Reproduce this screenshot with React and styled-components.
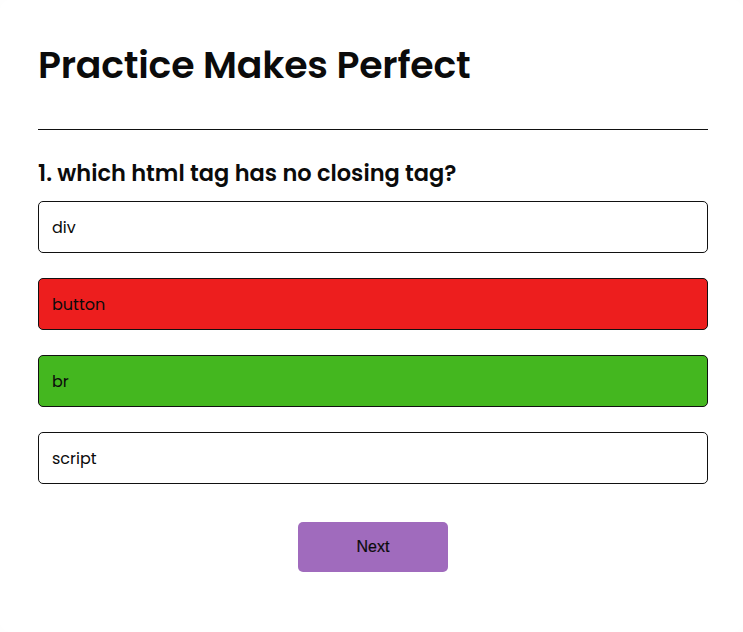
import React, { useState } from 'react';
import styled, { createGlobalStyle } from 'styled-components';

const GlobalStyle = createGlobalStyle`
  body {
    margin: 0;
    background: #fefefe;
    font-family: "Poppins", "Inter", "Noto Sans", sans-serif;
    color: #0b0b0b;
  }
`

const Card = styled.div`
  background: #fff;
  border-radius: 10px;
  padding: 40px 35px 60px 38px;
  min-height: 632px;
  box-sizing: border-box;
`

const Title = styled.h1`
  font-size: 37.8px;
  font-weight: 600;
  line-height: 50px;
  margin: 0 0 39px;
  letter-spacing: -0.2px;
`

const Rule = styled.hr`
  border: none;
  border-top: 1px solid #111;
  margin: 0 0 28px;
`

const Question = styled.h2`
  font-size: 22.5px;
  font-weight: 600;
  line-height: 30px;
  margin: 0 0 13px;
`

const OptionList = styled.ul`
  list-style: none;
  margin: 0;
  padding: 0;
  display: flex;
  flex-direction: column;
  gap: 25px;
`

const Option = styled.li`
  height: 52px;
  box-sizing: border-box;
  border: 1px solid #111;
  border-radius: 5px;
  padding: 0 13px;
  display: flex;
  align-items: center;
  font-size: 16px;
  background: ${({ $state }) =>
    $state === 'wrong' ? '#ed1e1e' : $state === 'right' ? '#44b71f' : '#fff'};
  cursor: pointer;
`

const Footer = styled.div`
  display: flex;
  justify-content: center;
  margin-top: 38px;
`

const NextButton = styled.button`
  width: 150px;
  height: 50px;
  border: none;
  border-radius: 5px;
  background: #a06bbd;
  font-family: "Liberation Sans", Arial, sans-serif;
  font-size: 16px;
  font-weight: 500;
  color: #0b0b0b;
  cursor: pointer;
  -webkit-text-stroke: 0.2px #0b0b0b;
`

const options = [
  { text: 'div', state: '' },
  { text: 'button', state: 'wrong' },
  { text: 'br', state: 'right' },
  { text: 'script', state: '' },
]

const App = () => {
  const [index] = useState(0)
  return (
    <>
      <GlobalStyle />
      <Card>
        <Title>Practice Makes Perfect</Title>
        <Rule />
        <Question>{index + 1}. which html tag has no closing tag?</Question>
        <OptionList>
          {options.map((o) => (
            <Option key={o.text} $state={o.state}>{o.text}</Option>
          ))}
        </OptionList>
        <Footer>
          <NextButton>Next</NextButton>
        </Footer>
      </Card>
    </>
  )
}

export default App
